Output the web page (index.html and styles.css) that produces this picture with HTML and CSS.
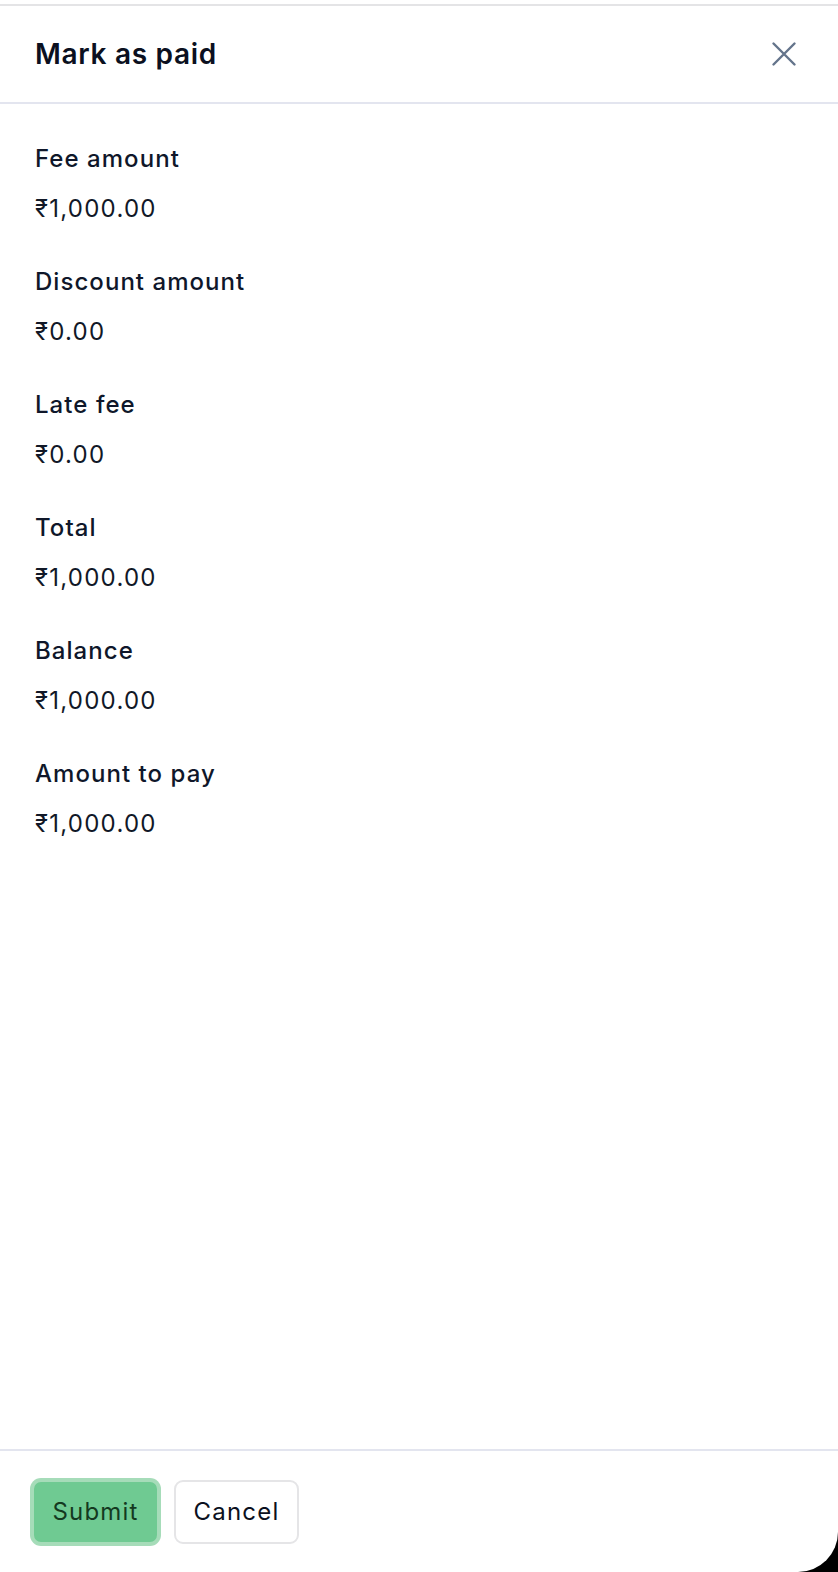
FILE: index.html
```html
<!DOCTYPE html>
<html lang="en">
<head>
<meta charset="utf-8">
<title>Mark as paid</title>
<link rel="stylesheet" href="styles.css">
</head>
<body>
<div class="panel">
  <header class="panel-header">
    <h1 class="panel-title">Mark as paid</h1>
    <button class="close-btn" aria-label="Close">
      <svg viewBox="0 0 24 24" width="42" height="42" fill="none" stroke="currentColor" stroke-width="1.4" stroke-linecap="round"><path d="M6 6L18 18M18 6L6 18"/></svg>
    </button>
  </header>
  <main class="panel-body">
    <div class="field"><div class="field-label">Fee amount</div><div class="field-value">₹1,000.00</div></div>
    <div class="field"><div class="field-label">Discount amount</div><div class="field-value">₹0.00</div></div>
    <div class="field"><div class="field-label">Late fee</div><div class="field-value">₹0.00</div></div>
    <div class="field"><div class="field-label">Total</div><div class="field-value">₹1,000.00</div></div>
    <div class="field"><div class="field-label">Balance</div><div class="field-value">₹1,000.00</div></div>
    <div class="field"><div class="field-label">Amount to pay</div><div class="field-value">₹1,000.00</div></div>
  </main>
  <footer class="panel-footer">
    <button class="btn btn-primary">Submit</button>
    <button class="btn btn-secondary">Cancel</button>
  </footer>
</div>
</body>
</html>
```
FILE: styles.css
```css
html {
  background: #000;
}
body {
  margin: 0;
  font-family: Inter, "Noto Sans", "DejaVu Sans", sans-serif;
  color: #0f172a;
}
.panel {
  box-sizing: border-box;
  height: 1572px;
  background: #fff;
  border-bottom-right-radius: 40px;
  padding-top: 4px;
  display: flex;
  flex-direction: column;
  overflow: hidden;
}
.panel-header {
  border-top: 2px solid #e4e4e6;
  border-bottom: 2px solid #e3e5ef;
  height: 100px;
  box-sizing: border-box;
  display: flex;
  align-items: center;
  justify-content: space-between;
  padding: 0 33px 0 35px;
}
.panel-title {
  margin: 0;
  font-size: 28px;
  font-weight: 600;
  letter-spacing: 0.7px;
  color: #0b1020;
}
.close-btn {
  border: 0;
  background: none;
  padding: 0;
  color: #64748b;
  display: flex;
  cursor: pointer;
}
.panel-body {
  flex: 1;
  padding: 37px 35px 0;
  display: flex;
  flex-direction: column;
  gap: 37px;
}
.field {
  display: flex;
  flex-direction: column;
  gap: 14px;
}
.field-label {
  font-size: 24px;
  line-height: 36px;
  font-weight: 500;
  letter-spacing: 1.05px;
  color: #0f172a;
}
.field-value {
  font-size: 24px;
  line-height: 36px;
  font-weight: 400;
  letter-spacing: 1.25px;
  color: #111827;
}
.panel-footer {
  border-top: 2px solid #e3e5ef;
  height: 123px;
  box-sizing: border-box;
  display: flex;
  align-items: center;
  gap: 15px;
  padding: 0 32px;
}
.btn {
  font-family: inherit;
  font-size: 24px;
  letter-spacing: 1.2px;
  height: 64px;
  border-radius: 9px;
  padding: 0;
  cursor: pointer;
}
.btn-primary {
  width: 127px;
  background: #6fca92;
  color: #14391f;
  border: 2px solid #a6dcb9;
  box-shadow: 0 0 0 2px #a6dcb9;
}
.btn-secondary {
  width: 125px;
  background: #fff;
  color: #0b1020;
  border: 2px solid #e5e5e7;
}
```
